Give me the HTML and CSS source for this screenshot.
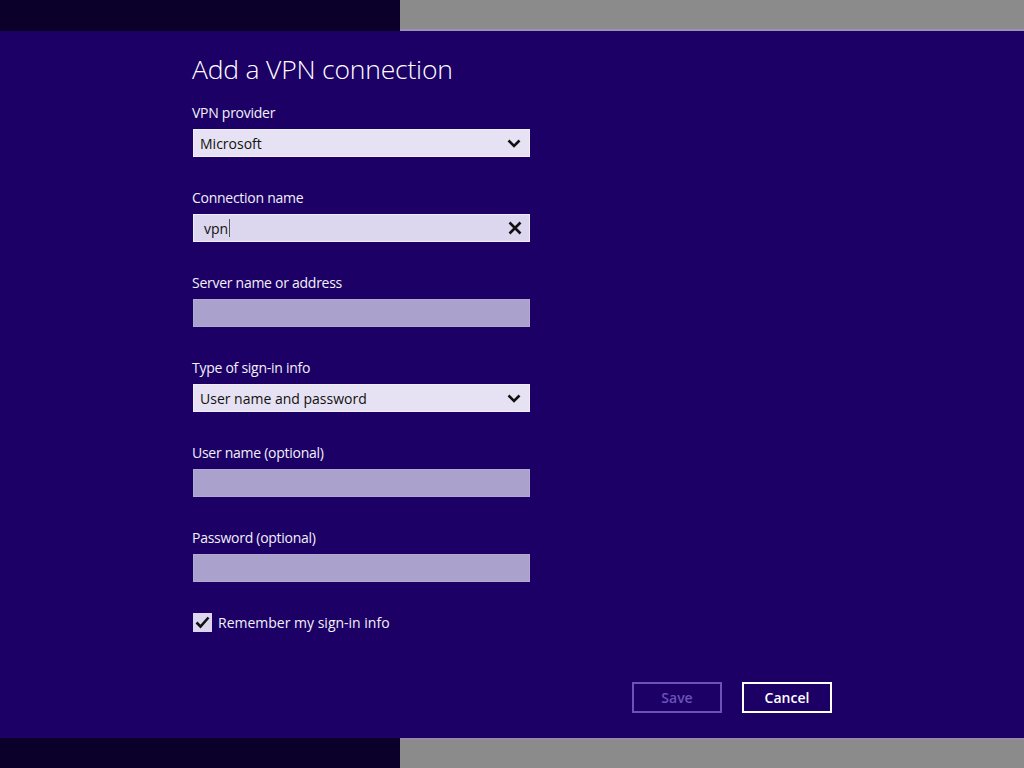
FILE: index.html
```html
<!DOCTYPE html>
<html>
<head>
<meta charset="utf-8">
<link rel="stylesheet" href="styles.css">
</head>
<body>
<div class="band top"><div class="dark"></div><div class="gray"></div></div>
<div class="main">
  <div class="form">
    <h1 class="title">Add a VPN connection</h1>
    <div class="field">
      <div class="label">VPN provider</div>
      <div class="select"><span class="value">Microsoft</span>
        <svg class="chev" width="14" height="9" viewBox="0 0 14 9"><path d="M1.5 1.5 L7 7 L12.5 1.5" fill="none" stroke="#111" stroke-width="2.6"/></svg>
      </div>
    </div>
    <div class="field">
      <div class="label">Connection name</div>
      <div class="textbox active"><span class="typed">vpn</span><span class="caret"></span>
        <svg class="clear" width="14" height="14" viewBox="0 0 14 14"><path d="M1.5 1.5 L12.5 12.5 M12.5 1.5 L1.5 12.5" fill="none" stroke="#111" stroke-width="2.6"/></svg>
      </div>
    </div>
    <div class="field">
      <div class="label">Server name or address</div>
      <div class="textbox empty"></div>
    </div>
    <div class="field">
      <div class="label">Type of sign-in info</div>
      <div class="select"><span class="value">User name and password</span>
        <svg class="chev" width="14" height="9" viewBox="0 0 14 9"><path d="M1.5 1.5 L7 7 L12.5 1.5" fill="none" stroke="#111" stroke-width="2.6"/></svg>
      </div>
    </div>
    <div class="field">
      <div class="label">User name (optional)</div>
      <div class="textbox empty"></div>
    </div>
    <div class="field">
      <div class="label">Password (optional)</div>
      <div class="textbox empty"></div>
    </div>
    <div class="check-row">
      <span class="checkbox"><svg width="15" height="13" viewBox="0 0 15 13"><path d="M1.5 6.5 L5.5 10.5 L13.5 1.5" fill="none" stroke="#111" stroke-width="2.6"/></svg></span>
      <span class="check-label">Remember my sign-in info</span>
    </div>
    <div class="buttons">
      <button class="btn disabled">Save</button>
      <button class="btn">Cancel</button>
    </div>
  </div>
</div>
<div class="band bottom"><div class="dark"></div><div class="gray"></div></div>
</body>
</html>
```
FILE: styles.css
```css
html, body {
  margin: 0;
  padding: 0;
  background: #1c0066;
}
body {
  width: 1024px;
  height: 768px;
  overflow: hidden;
  font-family: "Open Sans", "Noto Sans", sans-serif;
  color: #f2f0fa;
}
.band {
  display: flex;
}
.band.top { height: 31px; }
.band.bottom { height: 30px; }
.band .dark {
  width: 400px;
  background: #0b0029;
}
.band .gray {
  flex: 1;
  background: #8b8b8b;
}
.band.top .gray { box-shadow: inset 0 -2px 0 #9a90b8; }
.band.bottom .gray { box-shadow: inset 0 2px 0 #958aa6; }
.main {
  height: 707px;
  background: #1c0066;
  padding: 20px 0 0 192px;
  box-sizing: border-box;
}
.form {
  width: 640px;
  display: flex;
  flex-direction: column;
}
.title {
  margin: 0;
  font-weight: 300;
  font-size: 26.5px;
  line-height: 36px;
  height: 36px;
  letter-spacing: -0.2px;
  color: #ffffff;
}
.field {
  display: flex;
  flex-direction: column;
  margin-top: 16px;
}
.field + .field { margin-top: 31px; }
.label {
  font-size: 14px;
  line-height: 20px;
  height: 20px;
  margin-bottom: 6px;
  letter-spacing: -0.27px;
}
.select, .textbox {
  width: 337px;
  height: 28px;
  box-sizing: border-box;
  margin-left: 1px;
  display: flex;
  align-items: center;
  border: 1px solid #efedf8;
  font-size: 14px;
  color: #111;
}
.select {
  background: #e6e2f3;
  padding: 0 8px 0 6px;
  justify-content: space-between;
}
.textbox.active {
  background: #dcd7ee;
  padding: 0 7px 0 10px;
}
.textbox.empty {
  background: #aaa2cd;
  border-color: #b2aad4;
}
.value, .typed { line-height: 20px; padding-top: 1px; }
.caret {
  width: 1px;
  height: 18px;
  background: #555;
  margin-left: 1px;
}
.clear { margin-left: auto; }
.check-row {
  display: flex;
  align-items: center;
  margin-top: 30px;
  height: 20px;
  margin-left: 1px;
}
.checkbox {
  width: 19px;
  height: 19px;
  box-sizing: border-box;
  background: #dcd7ee;
  display: flex;
  align-items: center;
  justify-content: center;
  margin-right: 6px;
}
.check-label {
  font-size: 14px;
  line-height: 20px;
  letter-spacing: 0;
  padding-top: 1px;
}
.buttons {
  display: flex;
  justify-content: flex-end;
  gap: 20px;
  margin-top: 50px;
}
.btn {
  width: 90px;
  height: 31px;
  box-sizing: border-box;
  background: transparent;
  border: 2px solid #ffffff;
  color: #ffffff;
  font-family: "Open Sans", "Noto Sans", sans-serif;
  font-weight: 600;
  font-size: 14px;
  padding: 0;
}
.btn.disabled {
  border-color: #6a52b8;
  color: #6a52b8;
}
```
